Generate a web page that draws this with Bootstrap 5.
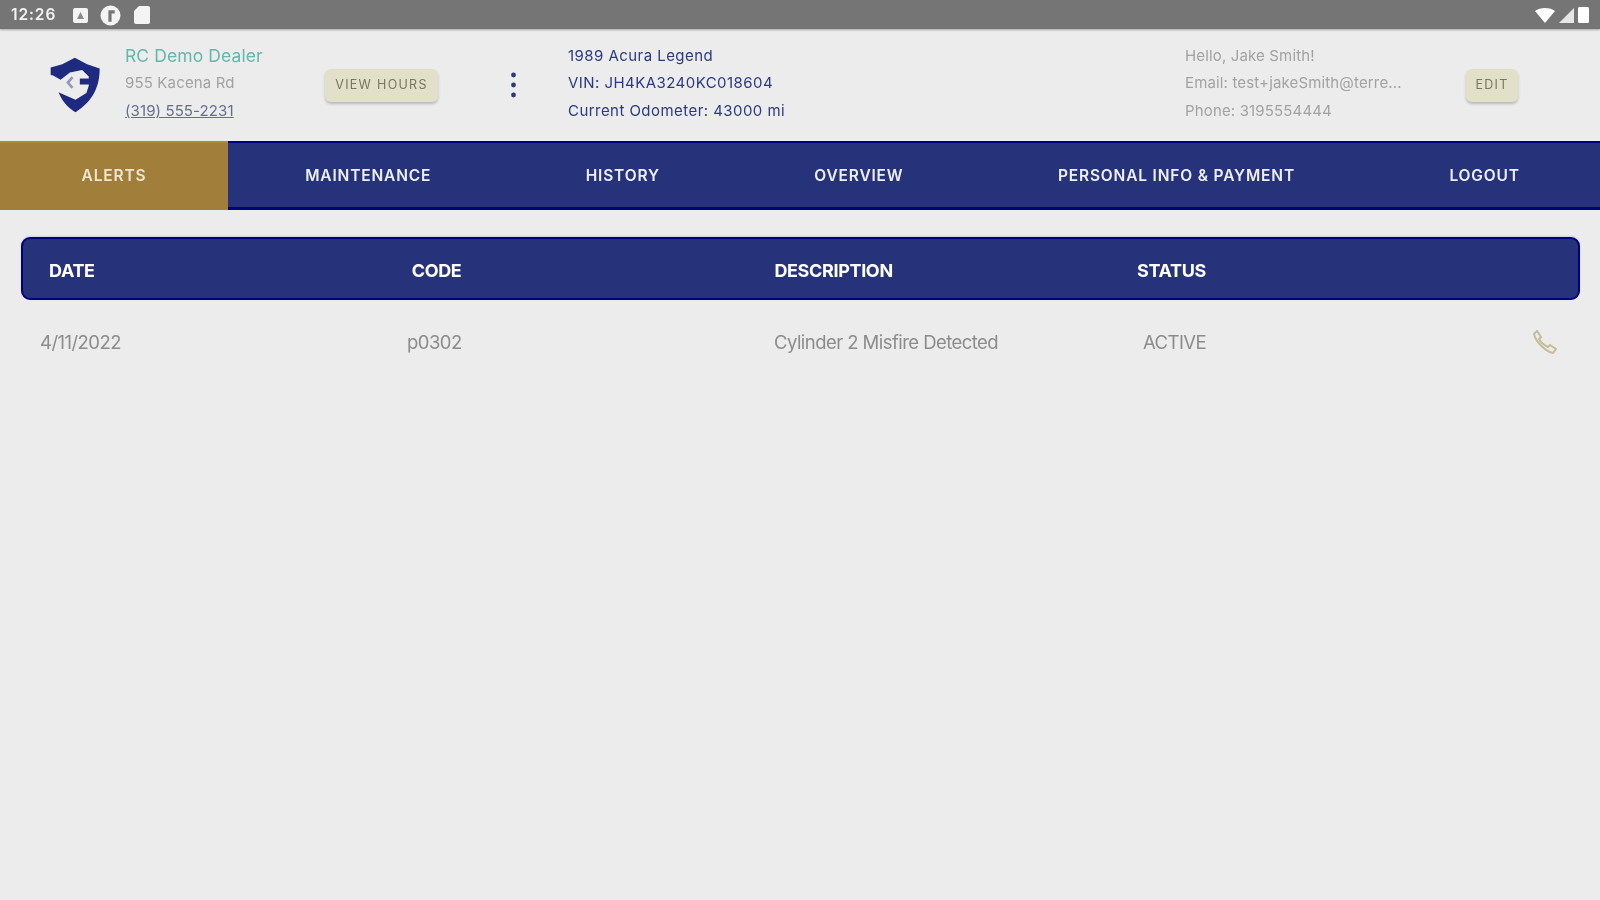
<!DOCTYPE html>
<html lang="en">
<head>
<meta charset="utf-8">
<title>Alerts</title>
<link href="https://cdn.jsdelivr.net/npm/bootstrap@5.3.0/dist/css/bootstrap.min.css" rel="stylesheet">
<style>
html,body{height:100%;}
body{background:#ececec;font-family:Inter,"Liberation Sans",sans-serif;overflow:hidden;}
.page-soft{filter:blur(.45px);}
.sysbar{height:29px;background:#757575;color:#f2f2f2;font-size:15.5px;font-weight:600;padding:1px 11px 0;box-shadow:0 1px 2px rgba(0,0,0,.3);letter-spacing:.9px;}
.sysbar svg{display:block;}
.gap-a{margin-left:17px;}
.gap-b{margin-left:12px;}
.gap-c{margin-left:13px;}
.hdr{height:112px;padding-bottom:4px;}
.logo-col{width:125px;padding-left:49px;padding-top:4px;}
.dealer-col{width:200px;}
.hours-col{width:186px;}
.vin-col{width:57px;padding-top:4px;}
.car-col{width:617px;color:#2b3a7d;letter-spacing:.45px;}
.user-col{width:281px;color:#a2a2a2;letter-spacing:.15px;}
.info{font-size:15px;line-height:27.4px;white-space:nowrap;}
.dealer-name{color:#62b9ac;font-size:17.5px;letter-spacing:.1px;}
.dealer-sub{color:#a2a2a2;letter-spacing:.15px;}
.dealer-tel{color:#666c92;text-decoration:underline;letter-spacing:.1px;}
.tan-btn{background:#e2e0c9;color:#77765f;border:0;border-radius:6px;font-size:12.5px;letter-spacing:1.3px;height:33px;padding:0;box-shadow:0 2px 3px rgba(0,0,0,.22);margin-top:4px;}
.tan-hours{width:113px;}
.tan-edit{width:52px;}
.dots{width:5px;}
.mainnav{height:69px;background:#26337a;border-top:2px solid #00007e;border-bottom:3px solid #00007e;padding-right:3px;}
.mainnav a{flex-grow:1;color:#eef0f6;font-size:15.500px;font-weight:600;text-decoration:none;text-align:center;letter-spacing:.83px;white-space:nowrap;line-height:66px;}
.mainnav a.on{background:#a17e3a;width:228px;flex-grow:0;color:#eee6d2;margin-top:-2px;margin-bottom:-3px;border-top:2px solid #b08a2e;border-bottom:3px solid #a17e3a;height:69px;}
.tbl{padding:27px 20px 0 21px;}
.thead-bar{height:63px;background:#26337a;border:2px solid #00007e;border-radius:9px;color:#fff;font-weight:700;font-size:18px;letter-spacing:-.35px;padding-left:26px;padding-top:3px;box-shadow:0 -1px 2px rgba(0,0,0,.12);}
.tcell{width:362.7px;}
.trow{color:#8c8c8c;font-size:18.5px;letter-spacing:-.55px;padding:26px 0 0 19px;line-height:32px;}
.rc1{width:367px;}.rc2{width:367px;}.rc3{width:369px;}
.phone-ic{margin-left:auto;margin-right:23px;}
</style>
</head>
<body>
<div class="page-soft">
<div class="sysbar d-flex align-items-center">
  <span>12:26</span>
  <svg class="gap-a" width="15" height="15" viewBox="0 0 15 15"><rect x="0" y="0" width="15" height="15" rx="2" fill="#f4f4f4"/><path d="M4 11 7.500 4 11 11Z" fill="#8a8a8a"/></svg>
  <svg class="gap-b" width="21" height="21" viewBox="0 0 20 20"><circle cx="10" cy="10" r="9.500" fill="#f4f4f4"/><path d="M8 16V5h6v3h-3v8Z" fill="#757575"/></svg>
  <svg class="gap-c" width="16" height="18" viewBox="0 0 16 18"><path d="M5 0h9a2 2 0 0 1 2 2v14a2 2 0 0 1-2 2H2a2 2 0 0 1-2-2V5Z" fill="#f4f4f4"/></svg>
  <svg class="ms-auto" width="20" height="15" viewBox="0 0 20 15"><path d="M0 3C5-1 15-1 20 3L10 15Z" fill="#fff"/></svg>
  <svg class="ms-1" width="15" height="15" viewBox="0 0 15 15"><path d="M15 0V15H0Z" fill="#e6e6e6"/></svg>
  <svg class="ms-1" width="11" height="16" viewBox="0 0 11 16"><rect width="11" height="16" rx="1.500" fill="#fff"/></svg>
</div>

<header class="hdr d-flex align-items-center">
  <div class="logo-col">
    <svg class="d-block" width="53" height="58" viewBox="15 20 160 175" aria-label="logo">
      <path d="M20 55 55 45 93 25 130 45 168 58C168 110 150 155 95 190 75 178 60 165 46 135L20 76Z" fill="#1e2a80"/>
      <path d="M10 78 26 78 50 92 78 70 115 62 135 82 135 110 128 132 95 152 45 130 10 132Z" fill="#ececec"/>
      <path d="M108 88H140V106H108Z" fill="#1e2a80"/>
      <path d="M86 84 72 100 86 116" fill="none" stroke="#9299c0" stroke-width="8"/>
    </svg>
  </div>
  <div class="dealer-col info">
    <div class="dealer-name">RC Demo Dealer</div>
    <div class="dealer-sub">955 Kacena Rd</div>
    <div class="dealer-tel">(319) 555-2231</div>
  </div>
  <div class="hours-col"><button type="button" class="btn tan-btn tan-hours">VIEW HOURS</button></div>
  <div class="vin-col">
    <svg class="dots d-block" width="5" height="26" viewBox="0 0 5 26"><circle cx="2.500" cy="3" r="2.400" fill="#2b3a7d"/><circle cx="2.500" cy="13" r="2.400" fill="#2b3a7d"/><circle cx="2.500" cy="23" r="2.400" fill="#2b3a7d"/></svg>
  </div>
  <div class="car-col info">
    <div>1989 Acura Legend</div>
    <div>VIN: JH4KA3240KC018604</div>
    <div>Current Odometer: 43000 mi</div>
  </div>
  <div class="user-col info">
    <div>Hello, Jake Smith!</div>
    <div>Email: test+jakeSmith@terre...</div>
    <div>Phone: 3195554444</div>
  </div>
  <button type="button" class="btn tan-btn tan-edit">EDIT</button>
</header>

<nav class="mainnav d-flex align-items-start">
  <a class="on" href="#">ALERTS</a>
  <a href="#">MAINTENANCE</a>
  <a href="#">HISTORY</a>
  <a href="#">OVERVIEW</a>
  <a href="#">PERSONAL INFO &amp; PAYMENT</a>
  <a href="#">LOGOUT</a>
</nav>

<main class="tbl">
  <div class="thead-bar d-flex align-items-center">
    <div class="tcell">DATE</div>
    <div class="tcell">CODE</div>
    <div class="tcell">DESCRIPTION</div>
    <div class="tcell">STATUS</div>
  </div>
  <div class="trow d-flex align-items-center">
    <div class="rc1">4/11/2022</div>
    <div class="rc2">p0302</div>
    <div class="rc3">Cylinder 2 Misfire Detected</div>
    <div>ACTIVE</div>
    <svg class="phone-ic" width="25" height="24" viewBox="0 0 25 24" aria-label="call"><path d="M2 4 5 1 9 7 7 9C9 13 12 15 16 17L18 15 24 19 21 23C15 22 4 13 2 4Z" fill="none" stroke="#c4bd98" stroke-width="2"/></svg>
  </div>
</main>
</div>
<script src="https://cdn.jsdelivr.net/npm/bootstrap@5.3.0/dist/js/bootstrap.bundle.min.js"></script>
</body>
</html>
